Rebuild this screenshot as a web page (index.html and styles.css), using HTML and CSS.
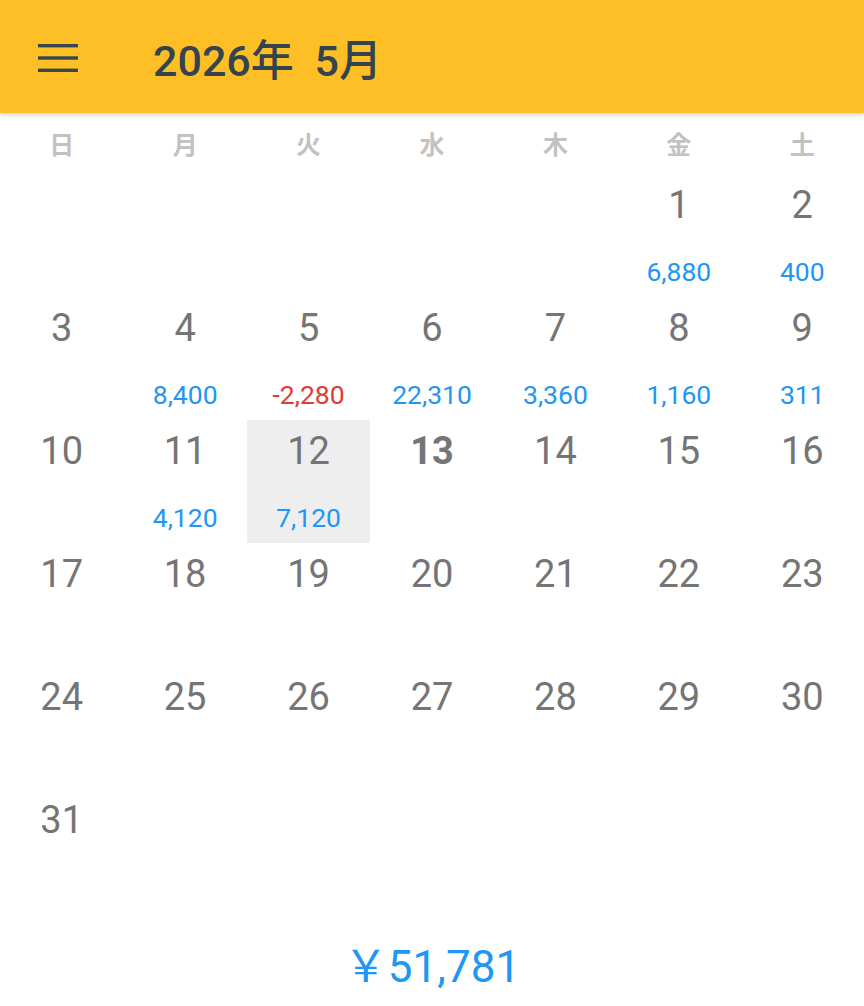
FILE: index.html
```html
<!DOCTYPE html>
<html lang="ja">
<head>
<meta charset="utf-8">
<link rel="stylesheet" href="styles.css">
</head>
<body>
<header class="appbar">
  <svg class="menu" width="40" height="30" viewBox="0 0 40 30">
    <rect x="0" y="1" width="40" height="3.4" fill="#37474F"/>
    <rect x="0" y="13.3" width="40" height="3.4" fill="#37474F"/>
    <rect x="0" y="25.6" width="40" height="3.4" fill="#37474F"/>
  </svg>
  <h1 class="title">2026年 5月</h1>
</header>
<div class="weekdays">
  <div>日</div><div>月</div><div>火</div><div>水</div><div>木</div><div>金</div><div>土</div>
</div>
<div class="grid">
  <div class="cell"></div><div class="cell"></div><div class="cell"></div><div class="cell"></div><div class="cell"></div>
  <div class="cell"><span class="num">1</span><span class="amt">6,880</span></div>
  <div class="cell"><span class="num">2</span><span class="amt">400</span></div>

  <div class="cell"><span class="num">3</span><span class="amt"></span></div>
  <div class="cell"><span class="num">4</span><span class="amt">8,400</span></div>
  <div class="cell"><span class="num">5</span><span class="amt neg">-2,280</span></div>
  <div class="cell"><span class="num">6</span><span class="amt">22,310</span></div>
  <div class="cell"><span class="num">7</span><span class="amt">3,360</span></div>
  <div class="cell"><span class="num">8</span><span class="amt">1,160</span></div>
  <div class="cell"><span class="num">9</span><span class="amt">311</span></div>

  <div class="cell"><span class="num">10</span><span class="amt"></span></div>
  <div class="cell"><span class="num">11</span><span class="amt">4,120</span></div>
  <div class="cell selected"><span class="num">12</span><span class="amt">7,120</span></div>
  <div class="cell"><span class="num today">13</span><span class="amt"></span></div>
  <div class="cell"><span class="num">14</span><span class="amt"></span></div>
  <div class="cell"><span class="num">15</span><span class="amt"></span></div>
  <div class="cell"><span class="num">16</span><span class="amt"></span></div>

  <div class="cell"><span class="num">17</span><span class="amt"></span></div>
  <div class="cell"><span class="num">18</span><span class="amt"></span></div>
  <div class="cell"><span class="num">19</span><span class="amt"></span></div>
  <div class="cell"><span class="num">20</span><span class="amt"></span></div>
  <div class="cell"><span class="num">21</span><span class="amt"></span></div>
  <div class="cell"><span class="num">22</span><span class="amt"></span></div>
  <div class="cell"><span class="num">23</span><span class="amt"></span></div>

  <div class="cell"><span class="num">24</span><span class="amt"></span></div>
  <div class="cell"><span class="num">25</span><span class="amt"></span></div>
  <div class="cell"><span class="num">26</span><span class="amt"></span></div>
  <div class="cell"><span class="num">27</span><span class="amt"></span></div>
  <div class="cell"><span class="num">28</span><span class="amt"></span></div>
  <div class="cell"><span class="num">29</span><span class="amt"></span></div>
  <div class="cell"><span class="num">30</span><span class="amt"></span></div>

  <div class="cell"><span class="num">31</span><span class="amt"></span></div>
</div>
<div class="total">￥51,781</div>
</body>
</html>
```
FILE: styles.css
```css
* { box-sizing: border-box; }
html, body { margin: 0; padding: 0; }
body {
  width: 864px;
  height: 1006px;
  overflow: hidden;
  background: #ffffff;
  font-family: Roboto, "Noto Sans CJK JP", sans-serif;
}
.appbar {
  height: 113px;
  background: #FEBE26;
  display: flex;
  align-items: center;
  padding-left: 38px;
  box-shadow: 0 2px 5px rgba(0,0,0,0.18);
  position: relative;
  z-index: 1;
}
.menu { display: block; margin-top: 2px; }
.title {
  margin: 0 0 0 75px;
  font-size: 43px;
  font-weight: 500;
  color: #34444E;
  word-spacing: 10px;
}
.weekdays {
  display: grid;
  grid-template-columns: repeat(7, 1fr);
  height: 61px;
  padding-top: 15px;
}
.weekdays div {
  text-align: center;
  font-size: 25px;
  font-weight: 700;
  line-height: 36px;
  color: #C2C2C2;
}
.grid {
  display: grid;
  grid-template-columns: repeat(7, 1fr);
  grid-auto-rows: 123px;
}
.cell {
  display: flex;
  flex-direction: column;
  justify-content: space-between;
  align-items: center;
}
.cell.selected { background: #EEEEEE; }
.num {
  font-size: 38px;
  line-height: 62px;
  color: #757575;
}
.num.today { font-weight: 700; }
.amt {
  font-size: 26.5px;
  line-height: 50px;
  color: #2196F3;
}
.amt.neg { color: #E53935; }
.total {
  text-align: center;
  padding-top: 22px;
  font-size: 44px;
  line-height: 66px;
  color: #2196F3;
}
```
